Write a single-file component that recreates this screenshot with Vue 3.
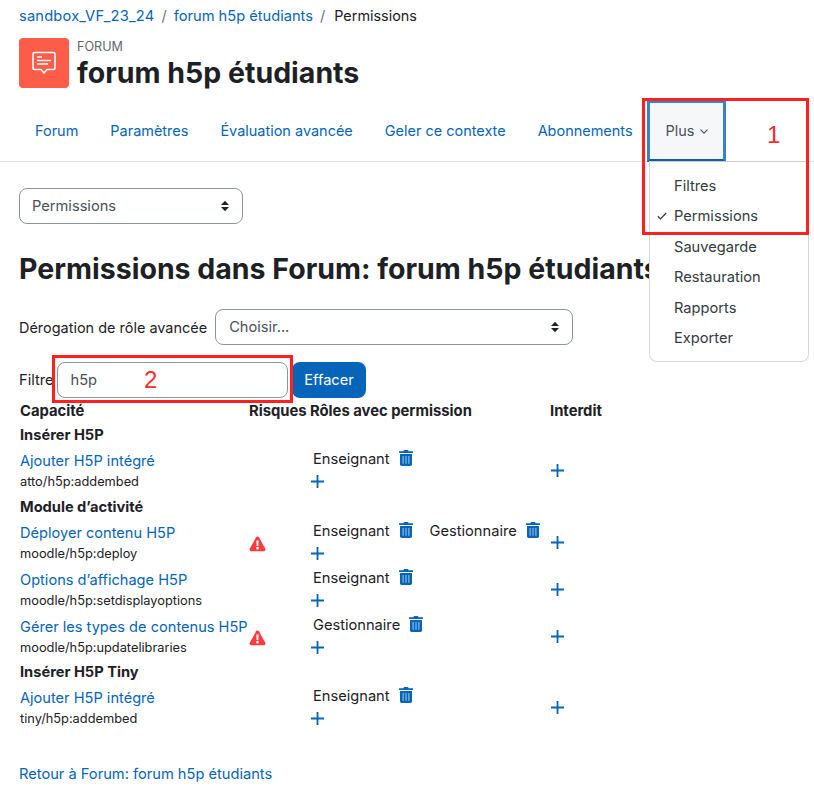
<script setup>
const nav = ['Forum', 'Paramètres', 'Évaluation avancée', 'Geler ce contexte', 'Abonnements']
const menu = [
  { t: 'Filtres' }, { t: 'Permissions', on: true }, { t: 'Sauvegarde' },
  { t: 'Restauration' }, { t: 'Rapports' }, { t: 'Exporter' }
]
const rows = [
  { group: 'Insérer H5P' },
  { name: 'Ajouter H5P intégré', code: 'atto/h5p:addembed', roles: ['Enseignant'] },
  { group: 'Module d’activité' },
  { name: 'Déployer contenu H5P', code: 'moodle/h5p:deploy', roles: ['Enseignant', 'Gestionnaire'], risk: true },
  { name: 'Options d’affichage H5P', code: 'moodle/h5p:setdisplayoptions', roles: ['Enseignant'] },
  { name: 'Gérer les types de contenus H5P', code: 'moodle/h5p:updatelibraries', roles: ['Gestionnaire'], risk: true },
  { group: 'Insérer H5P Tiny', tight: true },
  { name: 'Ajouter H5P intégré', code: 'tiny/h5p:addembed', roles: ['Enseignant'] }
]
</script>

<template>
  <div class="page">
    <nav class="crumbs">
      <a class="root">sandbox_VF_23_24</a><span class="sep">/</span><a>forum h5p étudiants</a><span class="sep last">/</span><span class="cur">Permissions</span>
    </nav>
    <header class="head">
      <div class="logo">
        <svg width="26" height="26" viewBox="0 0 26 26" fill="none" stroke="#fff" stroke-width="1.6" stroke-linejoin="round">
          <path d="M3.500 2.500h19a1.500 1.500 0 0 1 1.500 1.500v14a1.500 1.500 0 0 1-1.500 1.500h-6.500L13 23l-3-3.500H3.500A1.500 1.500 0 0 1 2 18V4a1.500 1.500 0 0 1 1.500-1.500z" />
          <path d="M6 7h5M6 10.500h14M6 14h11" stroke-width="1.600" />
        </svg>
      </div>
      <div>
        <div class="kicker">FORUM</div>
        <div class="title">forum h5p étudiants</div>
      </div>
    </header>

    <div class="tabs">
      <a v-for="n in nav" :key="n" class="tab">{{ n }}</a>
      <div class="tab more">Plus
        <svg width="8" height="5" viewBox="0 0 8 5" fill="none" stroke="#495057" stroke-width="1.100"><path d="M.5.700 4 4.200 7.500.700" /></svg>
      </div>
    </div>

    <main class="content">
      <div class="select nav-select"><span>Permissions</span><svg class="updown" width="10" height="12" viewBox="0 0 10 12" fill="#212529"><path d="M5 .8 9 5H1zM5 11.200 1 7h8z" /></svg></div>

      <h2>Permissions dans Forum: forum h5p étudiants</h2>

      <div class="adv">
        <label>Dérogation de rôle avancée</label>
        <div class="select adv-select"><span>Choisir...</span><svg class="updown" width="10" height="12" viewBox="0 0 10 12" fill="#212529"><path d="M5 .8 9 5H1zM5 11.200 1 7h8z" /></svg></div>
      </div>

      <div class="filter">
        <label>Filtre</label>
        <div class="input">h5p</div>
        <button class="btn">Effacer</button>
      </div>

      <div class="table">
        <div class="row thead">
          <div>Capacité</div><div>Risques</div><div>Rôles avec permission</div><div>Interdit</div>
        </div>
        <template v-for="(r, i) in rows" :key="i">
          <div v-if="r.group" class="group" :class="{ tight: r.tight }">{{ r.group }}</div>
          <div v-else class="row cap">
            <div class="c-name"><a>{{ r.name }}</a><small>{{ r.code }}</small></div>
            <div class="c-risk">
              <svg v-if="r.risk" width="17" height="16" viewBox="0 0 17 16"><path fill="#ff3a3f" d="M8.500.5c.6 0 1.100.3 1.400.8l6.500 11.600c.5 1-.2 2.300-1.400 2.300H2c-1.200 0-1.900-1.300-1.400-2.300L7.100 1.300C7.400.8 7.900.5 8.500.5z" /><path fill="#fff" d="M7.300 4.500h2.400l-.3 5.500H7.600zM8.500 10.800a1.400 1.400 0 1 1 0 2.800 1.400 1.400 0 0 1 0-2.800z" /></svg>
            </div>
            <div class="c-roles">
              <div class="role-line">
                <span v-for="role in r.roles" :key="role" class="role">{{ role }}
                  <svg class="trash" width="14" height="16" viewBox="0 0 14 16"><path fill="#0664b9" d="M5 0h4l.6 1.200H14v1.700H0V1.200h4.400zM1 3.900h12v10.400c0 1-.7 1.700-1.600 1.700H2.600C1.700 16 1 15.300 1 14.300z" /><path fill="#7fb2e0" d="M3.500 6h1.300v7.800H3.500zM6.350 6h1.300v7.800h-1.300zM9.200 6h1.300v7.800H9.200z" /></svg>
                </span>
              </div>
              <svg class="plus" width="13" height="13" viewBox="0 0 13 13"><path fill="#0664b9" d="M5.600 0h1.800v5.600H13v1.800H7.400V13H5.600V7.400H0V5.600h5.600z" /></svg>
            </div>
            <div class="c-deny">
              <svg width="13" height="13" viewBox="0 0 13 13"><path fill="#0664b9" d="M5.600 0h1.800v5.600H13v1.800H7.400V13H5.600V7.400H0V5.600h5.600z" /></svg>
            </div>
          </div>
        </template>
      </div>

      <a class="back">Retour à Forum: forum h5p étudiants</a>
    </main>

    <div class="menu">
      <div v-for="m in menu" :key="m.t" class="item">
        <svg v-if="m.on" class="check" width="10" height="8" viewBox="0 0 10 8" fill="none" stroke="#343a40" stroke-width="1.300"><path d="M.8 4.200 3.500 6.900 9.200 1" /></svg>
        {{ m.t }}
      </div>
    </div>

    <div class="mark box1"></div>
    <div class="mark box2"></div>
    <span class="num n1">1</span>
    <span class="num n2">2</span>
  </div>
</template>

<style>
html, body { margin: 0; background: #fff; }
</style>

<style scoped>
.page {
  position: relative;
  width: 814px;
  height: 801px;
  overflow: hidden;
  font-family: Inter, "Liberation Sans", sans-serif;
  font-size: 14.65px;
  line-height: 21px;
  color: #1d2125;
}
a { color: #0664b9; }
.crumbs { display: flex; align-items: baseline; padding: 5px 0 0 19px; height: 21px; }
.root { letter-spacing: .2px; }
.sep { margin: 0 7px; color: #6a737b; }
.sep.last { margin-right: 9px; }
.cur { font-size: 14.4px; }
.head { display: flex; gap: 8px; padding: 12px 0 0 19px; height: 50px; }
.logo { width: 50px; height: 50px; border-radius: 4px; background: #fd5c49; display: flex; align-items: center; justify-content: center; }
.kicker { font-size: 12.6px; line-height: 16px; color: #5f6871; margin-top: 1px; }
.title { font-size: 28.5px; font-weight: 700; line-height: 34px; margin-top: 1px; white-space: nowrap; }
.tabs { display: flex; margin-top: 12px; height: 61px; padding-left: 19px; border-bottom: 1px solid #dee2e6; font-size: 14.47px; }
.tab { padding: 0 16px; line-height: 62px; color: #0664b9; white-space: nowrap; }
.more {
  margin-left: -2px; width: 79px; box-sizing: border-box; padding: 0 0 0 1px; height: 62px; line-height: 56px;
  background: #f6f7f9; color: #495057; text-align: center;
  border: 3px solid #3584c4; border-bottom: 3px solid #0f5ca8;
}
.more svg { vertical-align: 2px; margin-left: 1px; }
.content { padding: 26px 0 0 19px; }
.select {
  box-sizing: border-box; height: 36px; border: 1px solid #8f959e; border-radius: 8px;
  display: flex; align-items: center; justify-content: space-between;
  padding: 0 12px; color: #495057; background: #fff;
}
.nav-select { width: 224px; }
h2 { margin: 28px 0 0; font-size: 28.5px; line-height: 34px; font-weight: 700; white-space: nowrap; height: 34px; }
.adv { display: flex; align-items: center; margin-top: 23px; gap: 8px; }
.adv label { font-size: 14.46px; }
.adv-select { width: 358px; padding-left: 13px; }
.filter { display: flex; align-items: center; margin-top: 17px; height: 36px; }
.input {
  box-sizing: border-box; width: 231px; height: 36px; margin-left: 3px; padding: 0 13px;
  border: 1px solid #8f959e; border-radius: 8px; line-height: 34px; color: #495057;
}
.btn {
  margin-left: 4px; width: 74px; height: 36px; border: 0; border-radius: 8px; background: #0664b9;
  color: #fff; font: inherit; padding: 0 0 0 1px;
}
.table { margin-top: 0; padding-left: 1px; }
.row { display: grid; grid-template-columns: 229px 61px 240px 100px; }
.thead { font-weight: 700; height: 24px; line-height: 24px; margin-top: 1px; font-size: 14.8px; }
.group { font-weight: 700; height: 26px; line-height: 24px; }
.cap + .group { margin-top: -1px; }
.cap + .group.tight { margin-top: -2px; }
.cap { height: 47px; }
.c-name { padding-top: 2px; white-space: nowrap; font-size: 14.6px; }
.c-name a, .c-name small { display: block; }
.c-name small { font-size: 12.8px; line-height: 19px; color: #1d2125; }
.c-risk { padding-top: 15px; }
.c-risk svg { display: block; }
.c-roles { padding: 0 0 0 3px; }
.role-line { display: flex; gap: 17px; height: 21px; padding-top: 0; }
.role { display: flex; gap: 9px; align-items: flex-start; white-space: nowrap; }
.trash { margin-top: 1px; }
.plus { display: block; margin-top: 5px; margin-left: -2px; }
.c-deny { padding-top: 15px; padding-left: 1px; }
.c-deny svg { display: block; }
.back { display: block; margin-top: 31px; }
.menu {
  position: absolute; left: 649px; top: 161px; width: 160px; height: 201px; box-sizing: border-box;
  background: #fff; border: 1px solid #d5d8dc; border-top-color: #c9cdd1; border-radius: 0 0 8px 8px; padding-top: 9px;
}
.item { position: relative; height: 30.4px; line-height: 30.4px; padding-left: 24px; color: #343a40; }
.check { position: absolute; left: 7px; top: 11px; }
.mark { position: absolute; border: 3px solid #ff2020; box-sizing: border-box; }
.box1 { left: 642px; top: 98px; width: 167px; height: 137px; }
.box2 { left: 52px; top: 355px; width: 241px; height: 48px; }
.num { position: absolute; color: #ff2a2a; font-family: "Liberation Sans", sans-serif; font-size: 24px; line-height: 28px; }
.n1 { left: 767px; top: 121px; }
.n2 { left: 144px; top: 366px; }
</style>
